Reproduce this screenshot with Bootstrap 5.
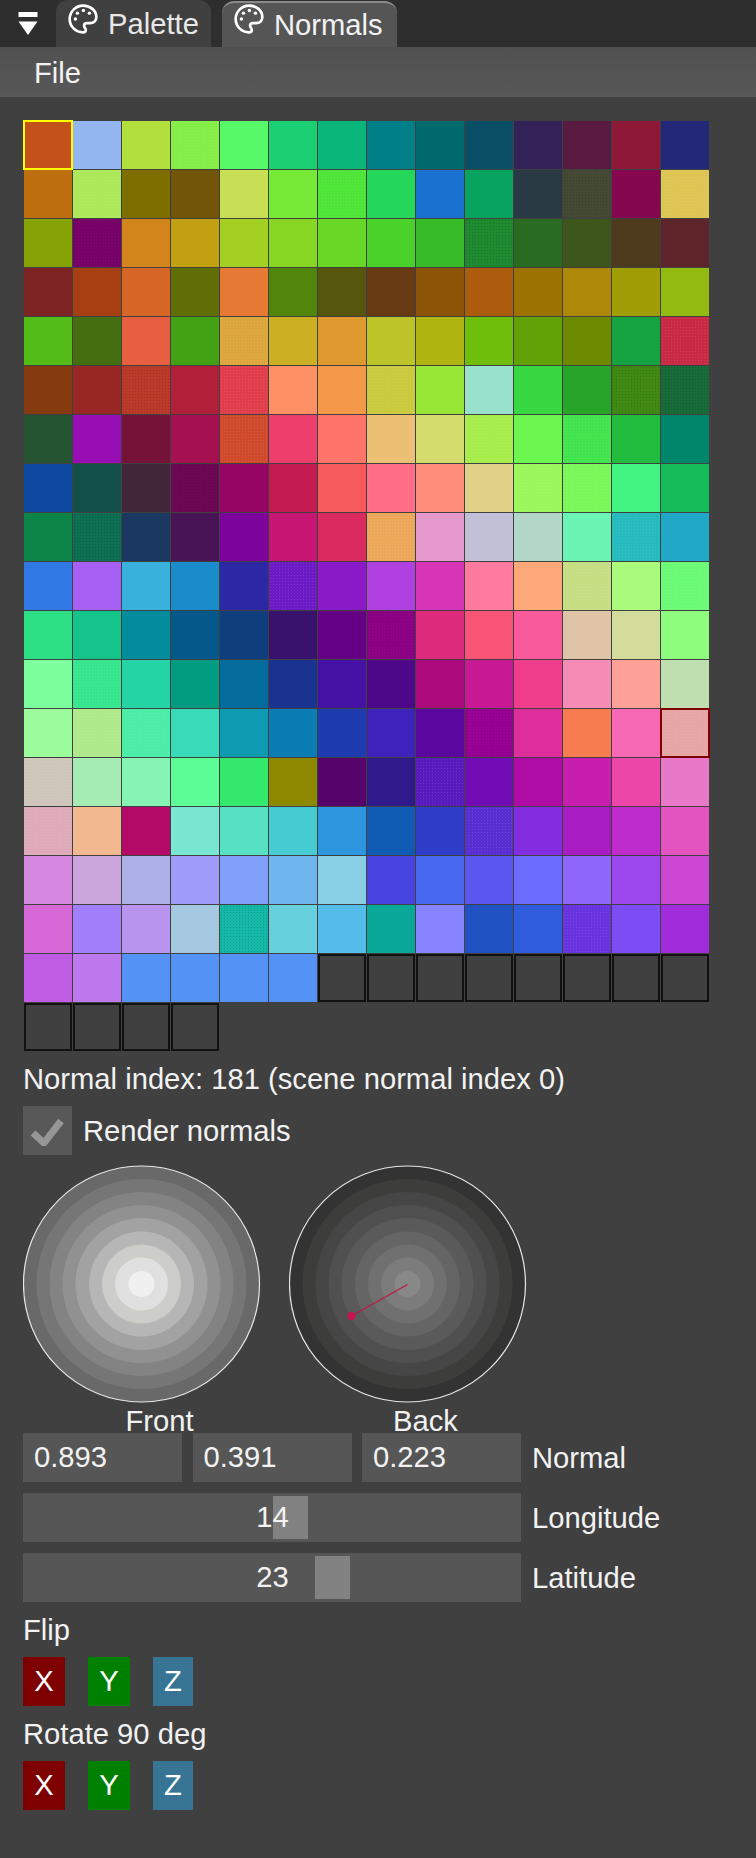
<!DOCTYPE html>
<html lang="en">
<head>
<meta charset="utf-8">
<title>Normals</title>
<link href="https://cdn.jsdelivr.net/npm/bootstrap@5.3.0/dist/css/bootstrap.min.css" rel="stylesheet">
<style>
html,body{background:#404040;color:#f2f2f2;font-family:"Liberation Sans",Arial,sans-serif;font-size:29.2px;line-height:32px;margin:0}
.appwin{width:756px;height:1858px;overflow:hidden}
.tabstrip{height:47px;background:#2e2e2e}
.collapse-ico{width:56px}
.tabitem{height:47px;border-radius:12px 12px 0 0;background:#404040;padding:0 12px 0 11px;gap:9px;color:#e8e8e8}
.tabitem.is-on{height:46px;margin-top:1px;margin-left:11px;background:#555;border-top:2px solid #8a8a8a;padding:0 14px 0 11px;gap:9px;color:#f2f2f2}
.tabitem svg{width:32px;height:32px;margin-top:-10px;flex:none}
.tabitem span{margin-top:1px}
.tabitem.is-on span{margin-top:-1px}
.tabitem.is-on svg{margin-top:-12px}
.menustrip{height:50px;background:linear-gradient(#505050,#585858);padding:2px 0 0 34px}
.mainpane{padding-left:23px}
.swatchgrid{display:grid;grid-template-columns:repeat(14,48px);grid-auto-rows:48px;gap:1px;margin:24px 0 0 1px;width:685px}
.swt{position:relative}
.swt-dth{background-image:radial-gradient(rgba(255,255,255,.1) .7px,transparent .9px);background-size:3px 3px}
.swt-dark{background-image:radial-gradient(rgba(0,0,0,.16) .7px,transparent .9px);background-size:3px 3px}
.swt-void{border:2px solid #111;outline:0}
.swt-yel{outline:2px solid #ff0;outline-offset:-1px}
.swt-red{outline:2.5px solid #800000;outline-offset:-1.5px}
.tline{height:32px;margin-top:12px;white-space:nowrap}
.checkrow{margin-top:11px;height:49px;gap:11px}
.checkbox-box{width:49px;height:49px;background:#585858}
.dialrow{margin-top:10px;gap:29px}
.dial{width:237px;flex:none}
.dial svg{display:block;width:238px;height:238px}
.dial-cap{height:28px;margin-top:2px;padding-left:36px;text-align:center;line-height:32px}
.fieldrow{width:630px;height:49px;gap:11px}
.fieldrow+.fieldrow{margin-top:11px}
.fieldwide{width:498px;gap:10.500px;flex:none}
.fieldbox{flex:1 1 0;height:49px;background:#565656;padding-left:11px;line-height:49px;white-space:nowrap}
.slidebox{position:relative;flex:none;width:498px;height:49px;background:#565656;text-align:center;line-height:49px}
.slidegrab{position:absolute;top:3px;width:35px;height:43px;background:#828282}
.slidenum{position:relative;margin-right:-1px}
.axisrow{margin-top:11px;gap:23px}
.axisbtn{width:42px;height:49px;padding:0;border:0;border-radius:0;font-size:29.2px;line-height:49px;color:#fff}
.axisbtn:hover{color:#fff}
.axis-x,.axis-x:hover{background:#7f0000}
.axis-y,.axis-y:hover{background:#008000}
.axis-z,.axis-z:hover{background:#387595;width:40px}
</style>
</head>
<body>
<div class="appwin d-flex flex-column">
  <div class="tabstrip d-flex align-items-end flex-none">
    <div class="collapse-ico d-flex justify-content-center align-self-stretch align-items-start">
      <svg width="24" height="47" viewBox="0 0 24 47" aria-hidden="true"><rect x="2.500" y="12" width="19" height="5" fill="#fff"/><path d="M2.500 21.500h19L12 35z" fill="#fff"/></svg>
    </div>
    <div class="tabitem d-flex align-items-center">
      <svg viewBox="0 0 24 24" fill="none" stroke="#fff" stroke-width="2" aria-hidden="true"><path d="M12 2a10 10 0 1 0 0 20c1.300 0 2.100-.8 2.100-1.900 0-.6-.3-1-.6-1.400-.4-.5-.7-1-.7-1.600 0-1.200 1-2 2.200-2h2.300c2.800 0 4.700-1.700 4.700-4.600C22 5.600 17.500 2 12 2z"/><g fill="#fff" stroke="none"><circle cx="6.300" cy="12" r="1.300"/><circle cx="7.800" cy="7.600" r="1.300"/><circle cx="12.300" cy="5.700" r="1.300"/><circle cx="16.800" cy="7.600" r="1.300"/></g></svg>
      <span>Palette</span>
    </div>
    <div class="tabitem is-on d-flex align-items-center">
      <svg viewBox="0 0 24 24" fill="none" stroke="#fff" stroke-width="2" aria-hidden="true"><path d="M12 2a10 10 0 1 0 0 20c1.300 0 2.100-.8 2.100-1.900 0-.6-.3-1-.6-1.400-.4-.5-.7-1-.7-1.600 0-1.200 1-2 2.200-2h2.300c2.800 0 4.700-1.700 4.700-4.600C22 5.600 17.500 2 12 2z"/><g fill="#fff" stroke="none"><circle cx="6.300" cy="12" r="1.300"/><circle cx="7.800" cy="7.600" r="1.300"/><circle cx="12.300" cy="5.700" r="1.300"/><circle cx="16.800" cy="7.600" r="1.300"/></g></svg>
      <span>Normals</span>
    </div>
  </div>
  <div class="menustrip d-flex align-items-center">File</div>
  <div class="mainpane">
    <div class="swatchgrid">
      <div class="swt swt-yel" style="background-color:#c2521a"></div><div class="swt" style="background-color:#93b5f0"></div><div class="swt" style="background-color:#b3df3c"></div><div class="swt swt-dth" style="background-color:#84ee46"></div><div class="swt" style="background-color:#58f968"></div><div class="swt" style="background-color:#1ad073"></div><div class="swt" style="background-color:#0ab679"></div><div class="swt" style="background-color:#007f86"></div><div class="swt" style="background-color:#006a6c"></div><div class="swt" style="background-color:#0a4f66"></div><div class="swt" style="background-color:#322258"></div><div class="swt" style="background-color:#581a40"></div><div class="swt" style="background-color:#8e1838"></div><div class="swt" style="background-color:#232878"></div>
      <div class="swt" style="background-color:#bd6f10"></div><div class="swt swt-dth" style="background-color:#ace858"></div><div class="swt" style="background-color:#7e6e00"></div><div class="swt" style="background-color:#725508"></div><div class="swt" style="background-color:#c8df55"></div><div class="swt" style="background-color:#76ea36"></div><div class="swt swt-dth" style="background-color:#4ee438"></div><div class="swt" style="background-color:#24d65a"></div><div class="swt" style="background-color:#1b71cf"></div><div class="swt" style="background-color:#08a35e"></div><div class="swt" style="background-color:#293a44"></div><div class="swt swt-dark" style="background-color:#454a34"></div><div class="swt" style="background-color:#85074f"></div><div class="swt swt-dth" style="background-color:#dec452"></div>
      <div class="swt" style="background-color:#85a306"></div><div class="swt swt-dark" style="background-color:#7a006a"></div><div class="swt" style="background-color:#d2851a"></div><div class="swt" style="background-color:#c3a012"></div><div class="swt" style="background-color:#a3d022"></div><div class="swt" style="background-color:#88d624"></div><div class="swt" style="background-color:#68d824"></div><div class="swt" style="background-color:#4ad22a"></div><div class="swt" style="background-color:#38bb28"></div><div class="swt swt-dark" style="background-color:#1f8b30"></div><div class="swt" style="background-color:#296b20"></div><div class="swt" style="background-color:#3c561c"></div><div class="swt" style="background-color:#4e3a1c"></div><div class="swt" style="background-color:#5e262a"></div>
      <div class="swt" style="background-color:#7e2424"></div><div class="swt" style="background-color:#a64012"></div><div class="swt" style="background-color:#d66626"></div><div class="swt" style="background-color:#606e06"></div><div class="swt" style="background-color:#e67a34"></div><div class="swt" style="background-color:#50860a"></div><div class="swt" style="background-color:#56560e"></div><div class="swt" style="background-color:#683a14"></div><div class="swt" style="background-color:#8c5406"></div><div class="swt" style="background-color:#ac5c0c"></div><div class="swt" style="background-color:#9c7202"></div><div class="swt" style="background-color:#ae8808"></div><div class="swt" style="background-color:#a09e06"></div><div class="swt" style="background-color:#92ba10"></div>
      <div class="swt" style="background-color:#54bc16"></div><div class="swt" style="background-color:#446e10"></div><div class="swt" style="background-color:#e85e40"></div><div class="swt" style="background-color:#42a214"></div><div class="swt swt-dth" style="background-color:#dca63c"></div><div class="swt" style="background-color:#ccb024"></div><div class="swt" style="background-color:#de9a2e"></div><div class="swt" style="background-color:#bcc428"></div><div class="swt" style="background-color:#b0b410"></div><div class="swt" style="background-color:#70be0c"></div><div class="swt" style="background-color:#62a206"></div><div class="swt" style="background-color:#6e8a00"></div><div class="swt" style="background-color:#16a442"></div><div class="swt swt-dth" style="background-color:#c82a44"></div>
      <div class="swt" style="background-color:#863a10"></div><div class="swt" style="background-color:#982622"></div><div class="swt swt-dark" style="background-color:#bc3a2a"></div><div class="swt" style="background-color:#b02038"></div><div class="swt swt-dth" style="background-color:#e03e4c"></div><div class="swt" style="background-color:#ff9064"></div><div class="swt" style="background-color:#f29848"></div><div class="swt swt-dth" style="background-color:#caca3e"></div><div class="swt" style="background-color:#98e636"></div><div class="swt" style="background-color:#98e2cc"></div><div class="swt" style="background-color:#38d640"></div><div class="swt" style="background-color:#28a428"></div><div class="swt swt-dark" style="background-color:#408a14"></div><div class="swt swt-dark" style="background-color:#186c3a"></div>
      <div class="swt" style="background-color:#245432"></div><div class="swt" style="background-color:#960eb4"></div><div class="swt" style="background-color:#741238"></div><div class="swt" style="background-color:#a41050"></div><div class="swt swt-dth" style="background-color:#d04a2c"></div><div class="swt" style="background-color:#ee3e6c"></div><div class="swt" style="background-color:#ff7468"></div><div class="swt" style="background-color:#ecc074"></div><div class="swt" style="background-color:#d4dc6e"></div><div class="swt swt-dth" style="background-color:#a6ec4a"></div><div class="swt" style="background-color:#6cf650"></div><div class="swt swt-dth" style="background-color:#42e44e"></div><div class="swt" style="background-color:#22bc3e"></div><div class="swt" style="background-color:#00866a"></div>
      <div class="swt" style="background-color:#0e48a0"></div><div class="swt" style="background-color:#14504a"></div><div class="swt" style="background-color:#402638"></div><div class="swt swt-dark" style="background-color:#6e0854"></div><div class="swt" style="background-color:#960464"></div><div class="swt" style="background-color:#c41c50"></div><div class="swt" style="background-color:#f65a5a"></div><div class="swt" style="background-color:#ff6e86"></div><div class="swt" style="background-color:#ff8e7c"></div><div class="swt" style="background-color:#e0d088"></div><div class="swt swt-dth" style="background-color:#9af65a"></div><div class="swt swt-dth" style="background-color:#7af85a"></div><div class="swt" style="background-color:#44f482"></div><div class="swt" style="background-color:#16bc5a"></div>
      <div class="swt" style="background-color:#0c8448"></div><div class="swt swt-dark" style="background-color:#0c7052"></div><div class="swt" style="background-color:#1a3860"></div><div class="swt" style="background-color:#481456"></div><div class="swt" style="background-color:#7c049c"></div><div class="swt" style="background-color:#c81674"></div><div class="swt" style="background-color:#da2a60"></div><div class="swt swt-dth" style="background-color:#eca858"></div><div class="swt" style="background-color:#e498cc"></div><div class="swt" style="background-color:#c2c0d6"></div><div class="swt" style="background-color:#b2d6c8"></div><div class="swt" style="background-color:#6cf4b4"></div><div class="swt swt-dth" style="background-color:#24babe"></div><div class="swt" style="background-color:#20a8c8"></div>
      <div class="swt" style="background-color:#3078e4"></div><div class="swt" style="background-color:#a860f4"></div><div class="swt" style="background-color:#38b2dc"></div><div class="swt" style="background-color:#1a8ccc"></div><div class="swt" style="background-color:#2c28a4"></div><div class="swt swt-dth" style="background-color:#6c1ac6"></div><div class="swt" style="background-color:#8a1ac8"></div><div class="swt" style="background-color:#b040e0"></div><div class="swt" style="background-color:#d834b8"></div><div class="swt" style="background-color:#ff7a9c"></div><div class="swt" style="background-color:#fca878"></div><div class="swt swt-dth" style="background-color:#c6de82"></div><div class="swt" style="background-color:#aafa7c"></div><div class="swt swt-dth" style="background-color:#6afa76"></div>
      <div class="swt" style="background-color:#2cde84"></div><div class="swt" style="background-color:#14c48a"></div><div class="swt" style="background-color:#048c9c"></div><div class="swt" style="background-color:#04588a"></div><div class="swt" style="background-color:#103e7c"></div><div class="swt" style="background-color:#38126c"></div><div class="swt" style="background-color:#640084"></div><div class="swt swt-dark" style="background-color:#8e0086"></div><div class="swt" style="background-color:#de2a7c"></div><div class="swt" style="background-color:#f85476"></div><div class="swt" style="background-color:#f85a9c"></div><div class="swt" style="background-color:#dfc4a8"></div><div class="swt" style="background-color:#d4dc9c"></div><div class="swt" style="background-color:#8efc7c"></div>
      <div class="swt" style="background-color:#7cfe9c"></div><div class="swt swt-dth" style="background-color:#36e68e"></div><div class="swt" style="background-color:#24d4a4"></div><div class="swt" style="background-color:#029c80"></div><div class="swt" style="background-color:#046c9c"></div><div class="swt" style="background-color:#1a3290"></div><div class="swt" style="background-color:#4412a4"></div><div class="swt" style="background-color:#4c0888"></div><div class="swt" style="background-color:#ac0a7c"></div><div class="swt" style="background-color:#c81894"></div><div class="swt" style="background-color:#ee3e8c"></div><div class="swt" style="background-color:#f48cb6"></div><div class="swt" style="background-color:#fca098"></div><div class="swt" style="background-color:#c0dfb0"></div>
      <div class="swt" style="background-color:#9cfc9c"></div><div class="swt swt-dth" style="background-color:#aeea8a"></div><div class="swt swt-dth" style="background-color:#4aeca6"></div><div class="swt" style="background-color:#38dab8"></div><div class="swt" style="background-color:#0e9ab0"></div><div class="swt" style="background-color:#0c7cb4"></div><div class="swt" style="background-color:#1e3cb0"></div><div class="swt" style="background-color:#3e22bc"></div><div class="swt" style="background-color:#5c06a0"></div><div class="swt swt-dark" style="background-color:#980096"></div><div class="swt" style="background-color:#de2e9c"></div><div class="swt" style="background-color:#f67c50"></div><div class="swt" style="background-color:#f668b4"></div><div class="swt swt-red swt-dth" style="background-color:#e6a6a6"></div>
      <div class="swt swt-dth" style="background-color:#cec6ba"></div><div class="swt" style="background-color:#a4ecb4"></div><div class="swt" style="background-color:#88f4b4"></div><div class="swt" style="background-color:#5cfc96"></div><div class="swt" style="background-color:#34e86c"></div><div class="swt" style="background-color:#8c8800"></div><div class="swt" style="background-color:#56046a"></div><div class="swt" style="background-color:#2f1a8c"></div><div class="swt swt-dth" style="background-color:#581abe"></div><div class="swt" style="background-color:#720cb4"></div><div class="swt" style="background-color:#ae0ca4"></div><div class="swt" style="background-color:#c81eb0"></div><div class="swt" style="background-color:#ec46a8"></div><div class="swt" style="background-color:#e878c8"></div>
      <div class="swt swt-dth" style="background-color:#deaaba"></div><div class="swt" style="background-color:#f2b890"></div><div class="swt" style="background-color:#b20a66"></div><div class="swt" style="background-color:#78e6d0"></div><div class="swt" style="background-color:#58e0c4"></div><div class="swt" style="background-color:#46ccd0"></div><div class="swt" style="background-color:#2e96de"></div><div class="swt" style="background-color:#105cb4"></div><div class="swt" style="background-color:#2e3cc8"></div><div class="swt swt-dth" style="background-color:#582ed2"></div><div class="swt" style="background-color:#822ee0"></div><div class="swt" style="background-color:#a81cc4"></div><div class="swt" style="background-color:#be2ccc"></div><div class="swt" style="background-color:#e454c0"></div>
      <div class="swt" style="background-color:#d488e0"></div><div class="swt" style="background-color:#caa6dc"></div><div class="swt" style="background-color:#aeb0e8"></div><div class="swt" style="background-color:#9e9cf8"></div><div class="swt" style="background-color:#80a0fc"></div><div class="swt" style="background-color:#70b6ee"></div><div class="swt" style="background-color:#88cee4"></div><div class="swt" style="background-color:#4844e2"></div><div class="swt" style="background-color:#4868f0"></div><div class="swt" style="background-color:#5c56f0"></div><div class="swt" style="background-color:#6c6cfe"></div><div class="swt" style="background-color:#8e66fc"></div><div class="swt" style="background-color:#9a48ee"></div><div class="swt" style="background-color:#cc48d4"></div>
      <div class="swt" style="background-color:#d668d8"></div><div class="swt" style="background-color:#a280fc"></div><div class="swt" style="background-color:#b894ee"></div><div class="swt" style="background-color:#a4c8e0"></div><div class="swt swt-dark" style="background-color:#16b8a8"></div><div class="swt" style="background-color:#66d0dc"></div><div class="swt" style="background-color:#54bce8"></div><div class="swt" style="background-color:#0aa898"></div><div class="swt" style="background-color:#8884ff"></div><div class="swt" style="background-color:#2052c4"></div><div class="swt" style="background-color:#2e5cdc"></div><div class="swt swt-dth" style="background-color:#6832de"></div><div class="swt" style="background-color:#7c4cf4"></div><div class="swt" style="background-color:#a02cdc"></div>
      <div class="swt" style="background-color:#c05ce4"></div><div class="swt" style="background-color:#bc78ec"></div><div class="swt" style="background-color:#5592f6"></div><div class="swt" style="background-color:#5592f6"></div><div class="swt" style="background-color:#5592f6"></div><div class="swt" style="background-color:#5592f6"></div><div class="swt swt-void"></div><div class="swt swt-void"></div><div class="swt swt-void"></div><div class="swt swt-void"></div><div class="swt swt-void"></div><div class="swt swt-void"></div><div class="swt swt-void"></div><div class="swt swt-void"></div>
      <div class="swt swt-void"></div><div class="swt swt-void"></div><div class="swt swt-void"></div><div class="swt swt-void"></div>
    </div>
    <div class="tline">Normal index: 181 (scene normal index 0)</div>
    <div class="checkrow d-flex align-items-center">
      <div class="checkbox-box d-flex align-items-center justify-content-center">
        <svg width="35" height="30" viewBox="0 0 35 30" aria-hidden="true"><path d="M3 17l11 10L31 5" fill="none" stroke="#969696" stroke-width="7"/></svg>
      </div>
      <div>Render normals</div>
    </div>
    <div class="dialrow d-flex">
      <div class="dial">
        <svg viewBox="0 0 238 238" aria-hidden="true"><circle cx="118.500" cy="119" r="118" fill="#696969" stroke="#e6e6e6" stroke-width="1.200"/><circle cx="118.500" cy="119" r="105" fill="#767676"/><circle cx="118.500" cy="119" r="92" fill="#838383"/><circle cx="118.500" cy="119" r="79" fill="#919191"/><circle cx="118.500" cy="119" r="66" fill="#a2a2a2"/><circle cx="118.500" cy="119" r="52.500" fill="#b6b6b6"/><circle cx="118.500" cy="119" r="39.500" fill="#cdcdc9"/><circle cx="118.500" cy="119" r="26.500" fill="#e0e0e0"/><circle cx="118.500" cy="119" r="13" fill="#f0f0f0"/></svg>
        <div class="dial-cap">Front</div>
      </div>
      <div class="dial">
        <svg viewBox="0 0 238 238" aria-hidden="true"><circle cx="118.500" cy="119" r="118" fill="#333" stroke="#e6e6e6" stroke-width="1.200"/><circle cx="118.500" cy="119" r="105" fill="#3d3d3b"/><circle cx="118.500" cy="119" r="92" fill="#464646"/><circle cx="118.500" cy="119" r="79" fill="#505050"/><circle cx="118.500" cy="119" r="66" fill="#5a5a5a"/><circle cx="118.500" cy="119" r="52.500" fill="#656565"/><circle cx="118.500" cy="119" r="39.500" fill="#707070"/><circle cx="118.500" cy="119" r="26.500" fill="#7c7c7c"/><circle cx="118.500" cy="119" r="13" fill="#888"/><line x1="118.500" y1="119.500" x2="62.500" y2="151" stroke="#c0183f" stroke-width="1.200"/><circle cx="62.500" cy="151" r="4" fill="#c8144e"/></svg>
        <div class="dial-cap">Back</div>
      </div>
    </div>
    <div class="fieldrow d-flex align-items-center">
      <div class="fieldwide d-flex">
        <div class="fieldbox">0.893</div>
        <div class="fieldbox">0.391</div>
        <div class="fieldbox">0.223</div>
      </div>
      <div>Normal</div>
    </div>
    <div class="fieldrow d-flex align-items-center">
      <div class="slidebox">
        <div class="slidegrab" style="left:250px"></div>
        <span class="slidenum">14</span>
      </div>
      <div>Longitude</div>
    </div>
    <div class="fieldrow d-flex align-items-center">
      <div class="slidebox">
        <div class="slidegrab" style="left:292px"></div>
        <span class="slidenum">23</span>
      </div>
      <div>Latitude</div>
    </div>
    <div class="tline">Flip</div>
    <div class="axisrow d-flex">
      <button type="button" class="btn axisbtn axis-x">X</button>
      <button type="button" class="btn axisbtn axis-y">Y</button>
      <button type="button" class="btn axisbtn axis-z">Z</button>
    </div>
    <div class="tline">Rotate 90 deg</div>
    <div class="axisrow d-flex">
      <button type="button" class="btn axisbtn axis-x">X</button>
      <button type="button" class="btn axisbtn axis-y">Y</button>
      <button type="button" class="btn axisbtn axis-z">Z</button>
    </div>
  </div>
</div>
<script src="https://cdn.jsdelivr.net/npm/bootstrap@5.3.0/dist/js/bootstrap.bundle.min.js"></script>
</body>
</html>
